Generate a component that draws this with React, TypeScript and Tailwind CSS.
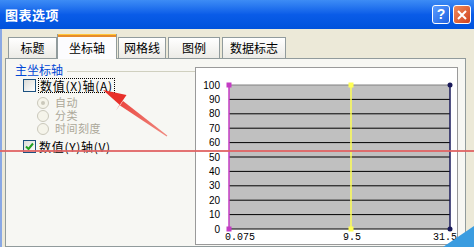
import React from 'react'

const cjk = "font-['Noto_Sans_CJK_SC','SimSun',sans-serif]"

const tabs = [
  { label: '标题', w: 'w-[49px]', ml: 'ml-[3px]' },
  { label: '坐标轴', w: 'w-[60px]', ml: 'ml-[0px]', active: true },
  { label: '网格线', w: 'w-[48px]', ml: 'ml-[1px]' },
  { label: '图例', w: 'w-[52px]', ml: 'ml-[2px]' },
  { label: '数据标志', w: 'w-[64px]', ml: 'ml-[2px]' },
]

function Tab({ label, w, ml, active }: { label: string; w: string; ml: string; active?: boolean }) {
  if (active) {
    return (
      <div className={`${w} ${ml} h-[25px] -mb-[1px] relative z-10 flex flex-col border-x border-[#919b9c] bg-[#fcfcfe]`}>
        <div className="h-[3px] bg-[#e68b2c] border-t border-[#ffc73c]" />
        <div className="flex-1 flex items-center justify-center text-[12px] text-black">{label}</div>
      </div>
    )
  }
  return (
    <div className={`${w} ${ml} h-[21px] flex items-center justify-center border border-b-0 border-[#919b9c] bg-gradient-to-b from-[#ffffff] to-[#ecebe6] text-[12px] text-black`}>
      {label}
    </div>
  )
}

function Checkbox({ checked }: { checked?: boolean }) {
  return (
    <div className="w-[13px] h-[13px] border border-[#1c5180] bg-gradient-to-br from-[#dcdcd7] to-[#ffffff] flex items-center justify-center">
      {checked && (
        <svg width="9" height="9" viewBox="0 0 9 9">
          <path d="M1 4.5 L3.5 7 L8 1.5" stroke="#21a121" strokeWidth="2" fill="none" />
        </svg>
      )}
    </div>
  )
}

function Radio({ label, on }: { label: string; on?: boolean }) {
  return (
    <div className="h-[13px] flex items-center pl-[31px]">
      <div className="w-[12px] h-[12px] rounded-full border border-[#cac8bb] bg-[#f5f4ea] flex items-center justify-center">
        {on && <div className="w-[4px] h-[4px] rounded-full bg-[#cac8bb]" />}
      </div>
      <span className="block ml-[6px] h-[12px] font-['Liberation_Sans','Noto_Sans_CJK_SC',sans-serif] text-[11px] leading-[12px] tracking-[0.5px] text-[#aca899]">{label}</span>
    </div>
  )
}

function Chart() {
  const top = 17
  const step = 14.4
  const ticks = [100, 90, 80, 70, 60, 50, 40, 30, 20, 10, 0]
  return (
    <svg width="261" height="176" viewBox="0 0 261 176" className="block">
      <rect x="33" y={top} width="221" height="144" fill="#c0c0c0" />
      {ticks.map((t, i) => (
        <g key={t}>
          <line x1="33" x2="254" y1={top + i * step} y2={top + i * step} stroke={i === 0 ? '#808080' : '#000'} strokeWidth="1" />
          <text x="24" y={top + i * step + 3.5} textAnchor="end" fontSize="10" fontFamily="Liberation Sans, Arial, sans-serif" fill="#000">{t}</text>
        </g>
      ))}
      <line x1="33" x2="33" y1={top} y2={top + 144} stroke="#c43cc4" strokeWidth="1.5" />
      <line x1="155" x2="155" y1={top} y2={top + 144} stroke="#ffff55" strokeWidth="1.5" />
      <line x1="254" x2="254" y1={top} y2={top + 144} stroke="#1a1a5a" strokeWidth="1.5" />
      <rect x="30.5" y={top - 2.5} width="5" height="5" fill="#c43cc4" />
      <rect x="30.5" y={top + 141.5} width="5" height="5" fill="#c43cc4" />
      <rect x="152.5" y={top - 2.5} width="5" height="5" fill="#ffff55" />
      <rect x="152.5" y={top + 141.5} width="5" height="5" fill="#ffff55" />
      <circle cx="254" cy={top} r="2.5" fill="#1a1a5a" />
      <circle cx="254" cy={top + 144} r="2.5" fill="#1a1a5a" />
      <text x="29" y="172" fontSize="10" fontFamily="Liberation Mono, monospace" fill="#000">0.075</text>
      <text x="147" y="172" fontSize="10" fontFamily="Liberation Mono, monospace" fill="#000">9.5</text>
      <text x="237" y="172" fontSize="10" fontFamily="Liberation Mono, monospace" fill="#000">31.5</text>
    </svg>
  )
}

export default function App() {
  return (
    <div className={`relative w-[474px] h-[247px] overflow-hidden bg-[#ece9d8] ${cjk}`}>
      {/* Title bar */}
      <div className="h-[29px] flex items-center justify-between pl-[5px] pr-[3px] bg-gradient-to-b from-[#3d8cf5] via-[#0a5ce8] to-[#0052dc]">
        <span className="text-[13px] font-bold text-white tracking-[0.5px]">图表选项</span>
        <div className="flex items-center gap-[3px]">
          <div className="w-[18px] h-[19px] rounded-[3px] border border-white bg-gradient-to-br from-[#5a9cff] to-[#2060e0] flex items-center justify-center text-white text-[14px] font-bold font-['Liberation_Sans',sans-serif]">?</div>
          <div className="w-[18px] h-[19px] rounded-[3px] border border-white bg-gradient-to-br from-[#f08a5a] to-[#d0401c] flex items-center justify-center">
            <svg width="10" height="10" viewBox="0 0 10 10">
              <path d="M1 1 L9 9 M9 1 L1 9" stroke="#fff" strokeWidth="2" />
            </svg>
          </div>
        </div>
      </div>

      {/* Body */}
      <div className="flex h-[218px]">
        <div className="w-[2px] bg-[#8aa8e4]" />
        <div className="pl-[3px] pt-[5px] w-[464px] flex flex-col">
          <div className="flex items-end h-[24px]">
            {tabs.map(t => (
              <Tab key={t.label} {...t} />
            ))}
          </div>
          <div className="flex-1 flex border border-[#919b9c] bg-[#f7f7f3]">
            {/* Left options */}
            <div className="w-[189px] flex flex-col">
              <div className="h-[14px] mt-[4px] flex items-center pl-[9px]">
                <span className="text-[12px] leading-[14px] text-[#0046d5]">主坐标轴</span>
                <div className="flex-1 h-px bg-[#d0d0bf] ml-[4px] mt-[3px]" />
              </div>
              <div className="h-[15px] mt-[1px] flex items-center pl-[17px]">
                <Checkbox />
                <span className="ml-[2px] px-[1px] border border-dotted border-black text-[12px] leading-[13px] tracking-[0.7px] text-black">数值(X)轴(A)</span>
              </div>
              <div className="mt-[3px] flex flex-col">
                <Radio label="自动" on />
                <Radio label="分类" />
                <Radio label="时间刻度" />
              </div>
              <div className="h-[14px] mt-[4px] flex items-center pl-[17px]">
                <Checkbox checked />
                <span className="ml-[3px] text-[12px] leading-[13px] tracking-[0.7px] text-black">数值(Y)轴(V)</span>
              </div>
            </div>
            {/* Chart preview */}
            <div className="mt-[8px] h-[178px] w-[263px] border border-[#9a9a9a] bg-white">
              <Chart />
            </div>
          </div>
        </div>
        <div className="flex-1 bg-[#ece9d8]" />
      </div>

      {/* Annotations */}
      <div className="absolute left-0 right-0 top-[150px] h-[2px] bg-[#e06464]/90" />
      <svg className="absolute left-0 top-0 pointer-events-none" width="474" height="247">
        <defs>
          <linearGradient id="arr" x1="167" y1="136" x2="103" y2="90" gradientUnits="userSpaceOnUse">
            <stop offset="0" stopColor="#f08a80" />
            <stop offset="1" stopColor="#e8302a" />
          </linearGradient>
        </defs>
        <polygon points="103,90 126.5,95 116,110.5 119.5,104.8" fill="#e8302a" />
        <polygon points="123,101 120,105.5 166.7,136.6 167.3,135.6" fill="url(#arr)" />
        <polygon points="443,247 474,226 474,247" fill="#3a9ce0" />
      </svg>
    </div>
  )
}
